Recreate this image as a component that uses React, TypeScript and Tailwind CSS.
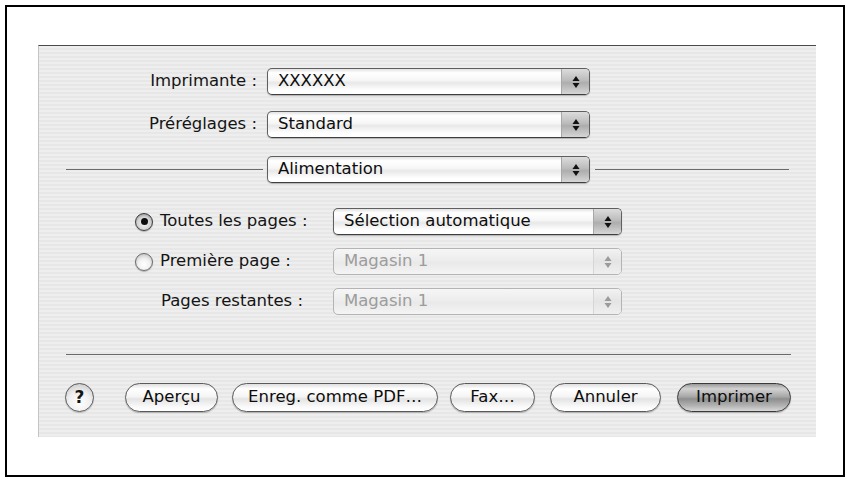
import React from 'react';

const font = { fontFamily: '"DejaVu Sans", "Liberation Sans", sans-serif' };

const Stepper = ({ disabled }: { disabled?: boolean }) => (
  <svg width="8" height="14" viewBox="0 0 8 14">
    <polygon points="4,1 7.5,6 0.5,6" fill={disabled ? '#9a9a9a' : '#111'} />
    <polygon points="0.5,8 7.5,8 4,13" fill={disabled ? '#9a9a9a' : '#111'} />
  </svg>
);

const Popup = ({ value, width, disabled }: { value: string; width: string; disabled?: boolean }) => (
  <div
    className={`${width} h-[27px] flex rounded-[5px] border overflow-hidden ${
      disabled
        ? 'border-[#b4b4b4] text-[#9c9c9c] bg-[linear-gradient(180deg,#f6f6f6_0%,#ededed_45%,#e9e9e9_55%,#f4f4f4_100%)]'
        : 'border-[#5f5f5f] border-b-[#3f3f3f] text-[#0d0d0d] shadow-[0_1px_1px_rgba(0,0,0,0.25)] bg-[linear-gradient(180deg,#e2e2e2_0%,#ffffff_15%,#f6f6f6_45%,#e8e8e8_55%,#ffffff_85%,#ffffff_100%)]'
    }`}
  >
    <div className="flex-1 flex items-center pl-[10px] leading-none">{value}</div>
    <div
      className={`w-[28px] flex items-center justify-center border-l ${
        disabled
          ? 'border-[#d6d6d6] bg-[linear-gradient(180deg,#f2f2f2,#e4e4e4_50%,#efefef)]'
          : 'border-[#a8a8a8] bg-[linear-gradient(180deg,#dcdcdc_0%,#bcbcbc_45%,#adadad_55%,#d6d6d6_100%)]'
      }`}
    >
      <Stepper disabled={disabled} />
    </div>
  </div>
);

const Radio = ({ checked }: { checked?: boolean }) => (
  <div
    className={`w-[18px] h-[18px] rounded-full border flex items-center justify-center shadow-[0_1px_1px_rgba(0,0,0,0.25)] ${
      checked
        ? 'border-[#3c3c3c] bg-[radial-gradient(circle_at_50%_60%,#f4f4f4_0%,#d0d0d0_55%,#707070_100%)]'
        : 'border-[#6a6a6a] bg-[radial-gradient(circle_at_50%_65%,#ffffff_0%,#f0f0f0_45%,#b4b4b4_100%)]'
    }`}
  >
    {checked && <div className="w-[7px] h-[7px] rounded-full bg-[#0d0d0d]" />}
  </div>
);

const Button = ({ label, width, primary }: { label: string; width: string; primary?: boolean }) => (
  <div
    className={`${width} h-[29px] rounded-full border flex items-center justify-center leading-none shadow-[0_1px_1px_rgba(0,0,0,0.25)] ${
      primary
        ? 'border-[#3a3a3a] text-[#0d0d0d] bg-[linear-gradient(180deg,#9a9a9a_0%,#d2d2d2_18%,#a6a6a6_48%,#8e8e8e_55%,#b2b2b2_80%,#d8d8d8_100%)]'
        : 'border-[#5a5a5a] text-[#0d0d0d] bg-[linear-gradient(180deg,#dedede_0%,#ffffff_18%,#f4f4f4_48%,#e3e3e3_55%,#fafafa_85%,#ffffff_100%)]'
    }`}
  >
    {label}
  </div>
);

export default function App() {
  return (
    <div className="w-[851px] h-[481px] bg-white p-[5px] text-[16.5px]" style={font}>
      <div className="w-[840px] h-[472px] border-2 border-black pl-[31px] pt-[38px]">
        <div className="w-[778px] h-[392px] border-t border-t-[#4a4a4a] border-l border-l-[#c4c4c4] bg-[repeating-linear-gradient(180deg,#eeeeee_0px,#eeeeee_2px,#e7e7e7_2px,#e7e7e7_4px)] flex flex-col text-[#141414]">
          {/* top popups */}
          <div className="flex items-center mt-[22px] gap-[10px]">
            <div className="w-[218px] text-right">Imprimante :</div>
            <Popup value="XXXXXX" width="w-[323px]" />
          </div>
          <div className="flex items-center mt-[16px] gap-[10px]">
            <div className="w-[218px] text-right">Préréglages :</div>
            <Popup value="Standard" width="w-[323px]" />
          </div>
          <div className="flex items-center mt-[18px] ml-[27px]">
            <div className="w-[197px] h-px bg-[#6a6a6a]" />
            <div className="ml-[4px]">
              <Popup value="Alimentation" width="w-[323px]" />
            </div>
            <div className="ml-[5px] w-[194px] h-px bg-[#6a6a6a]" />
          </div>

          {/* paper source */}
          <div className="flex items-center mt-[25px] ml-[96px]">
            <Radio checked />
            <div className="w-[180px] pl-[7px]">Toutes les pages :</div>
            <Popup value="Sélection automatique" width="w-[289px]" />
          </div>
          <div className="flex items-center mt-[13px] ml-[96px]">
            <Radio />
            <div className="w-[180px] pl-[7px]">Première page :</div>
            <Popup value="Magasin 1" width="w-[289px]" disabled />
          </div>
          <div className="flex items-center mt-[13px] ml-[96px]">
            <div className="w-[198px] pl-[26px]">Pages restantes :</div>
            <Popup value="Magasin 1" width="w-[289px]" disabled />
          </div>

          <div className="mt-[39px] ml-[27px] w-[725px] h-px bg-[#6a6a6a]" />

          {/* buttons */}
          <div className="flex items-center mt-[28px] ml-[26px]">
            <div className="w-[29px] h-[29px] rounded-full border-[1.5px] border-[#5a5a5a] flex items-center justify-center font-bold text-[17px] leading-none bg-[radial-gradient(circle_at_50%_70%,#ffffff_0%,#eeeeee_50%,#bdbdbd_100%)] shadow-[0_1px_1px_rgba(0,0,0,0.2)]">
              ?
            </div>
            <div className="ml-[31px]">
              <Button label="Aperçu" width="w-[93px]" />
            </div>
            <div className="ml-[14px]">
              <Button label="Enreg. comme PDF…" width="w-[206px]" />
            </div>
            <div className="ml-[12px]">
              <Button label="Fax…" width="w-[85px]" />
            </div>
            <div className="ml-[15px]">
              <Button label="Annuler" width="w-[111px]" />
            </div>
            <div className="ml-[16px]">
              <Button label="Imprimer" width="w-[114px]" primary />
            </div>
          </div>
        </div>
      </div>
    </div>
  );
}
